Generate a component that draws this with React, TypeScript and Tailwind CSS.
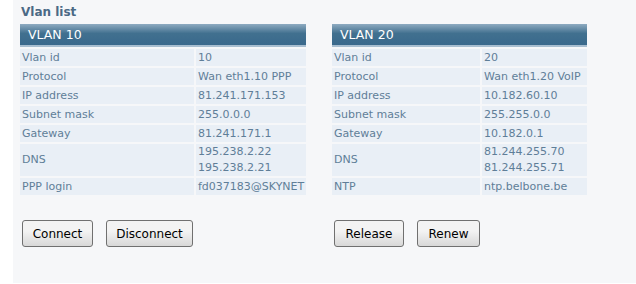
import React from "react";

type Row = { label: string; values: string[] };

const vlan10: Row[] = [
  { label: "Vlan id", values: ["10"] },
  { label: "Protocol", values: ["Wan eth1.10 PPP"] },
  { label: "IP address", values: ["81.241.171.153"] },
  { label: "Subnet mask", values: ["255.0.0.0"] },
  { label: "Gateway", values: ["81.241.171.1"] },
  { label: "DNS", values: ["195.238.2.22", "195.238.2.21"] },
  { label: "PPP login", values: ["fd037183@SKYNET"] },
];

const vlan20: Row[] = [
  { label: "Vlan id", values: ["20"] },
  { label: "Protocol", values: ["Wan eth1.20 VoIP"] },
  { label: "IP address", values: ["10.182.60.10"] },
  { label: "Subnet mask", values: ["255.255.0.0"] },
  { label: "Gateway", values: ["10.182.0.1"] },
  { label: "DNS", values: ["81.244.255.70", "81.244.255.71"] },
  { label: "NTP", values: ["ntp.belbone.be"] },
];

function VlanTable({
  title,
  rows,
  labelWidth,
  valueWidth,
}: {
  title: string;
  rows: Row[];
  labelWidth: string;
  valueWidth: string;
}) {
  return (
    <div className="flex flex-col">
      {/* Header bar */}
      <div className="h-[23px] border-b-2 border-[#a8bed0] bg-gradient-to-b from-[#8eabc1] via-[#41708f] via-45% to-[#3a698c] pl-[8px] text-[12.5px] leading-[21px] text-white">
        {title}
      </div>
      <div className="mt-[2px] flex flex-col gap-[2px]">
        {rows.map((r) => (
          <div key={r.label} className="flex gap-[2px]">
            <div className={`${labelWidth} flex min-h-[17px] items-center bg-[#e9eff6] pl-[2px] text-[#5f7e98]`}>
              <span className="leading-[16px]">{r.label}</span>
            </div>
            <div className={`${valueWidth} flex min-h-[17px] flex-col justify-center bg-[#e9eff6] pl-[2px] text-[#5f7e98]`}>
              {r.values.map((v) => (
                <div key={v} className="whitespace-nowrap leading-[16px]">
                  {v}
                </div>
              ))}
            </div>
          </div>
        ))}
      </div>
    </div>
  );
}

function Btn({ label, width }: { label: string; width: string }) {
  return (
    <button
      className={`${width} h-[27px] rounded-[3px] border border-[#707070] bg-gradient-to-b from-[#f3f3f3] from-40% to-[#d8d8d8] text-[12px] text-black [font-family:Tahoma,'DejaVu_Sans',sans-serif]`}
    >
      {label}
    </button>
  );
}

export default function App() {
  return (
    <div className="h-[284px] w-[636px] bg-white pl-[13px] text-[11px] [font-family:Verdana,'DejaVu_Sans',sans-serif]">
      <div className="h-[283px] bg-[#f6f7f9] pl-[7px] pt-[6px]">
        <div className="pl-px text-[12px] font-bold leading-[13px] text-[#4b6985]">Vlan list</div>

        <div className="mt-[5px] flex gap-[26px]">
          {/* VLAN 10 */}
          <div className="flex w-[286px] flex-col">
            <VlanTable title="VLAN 10" rows={vlan10} labelWidth="w-[174px]" valueWidth="w-[110px]" />
            <div className="mt-[25px] flex gap-[13px] pl-[2px]">
              <Btn label="Connect" width="w-[71px]" />
              <Btn label="Disconnect" width="w-[87px]" />
            </div>
          </div>

          {/* VLAN 20 */}
          <div className="flex w-[255px] flex-col">
            <VlanTable title="VLAN 20" rows={vlan20} labelWidth="w-[148px]" valueWidth="w-[105px]" />
            <div className="mt-[25px] flex gap-[13px] pl-[2px]">
              <Btn label="Release" width="w-[70px]" />
              <Btn label="Renew" width="w-[63px]" />
            </div>
          </div>
        </div>
      </div>
    </div>
  );
}
